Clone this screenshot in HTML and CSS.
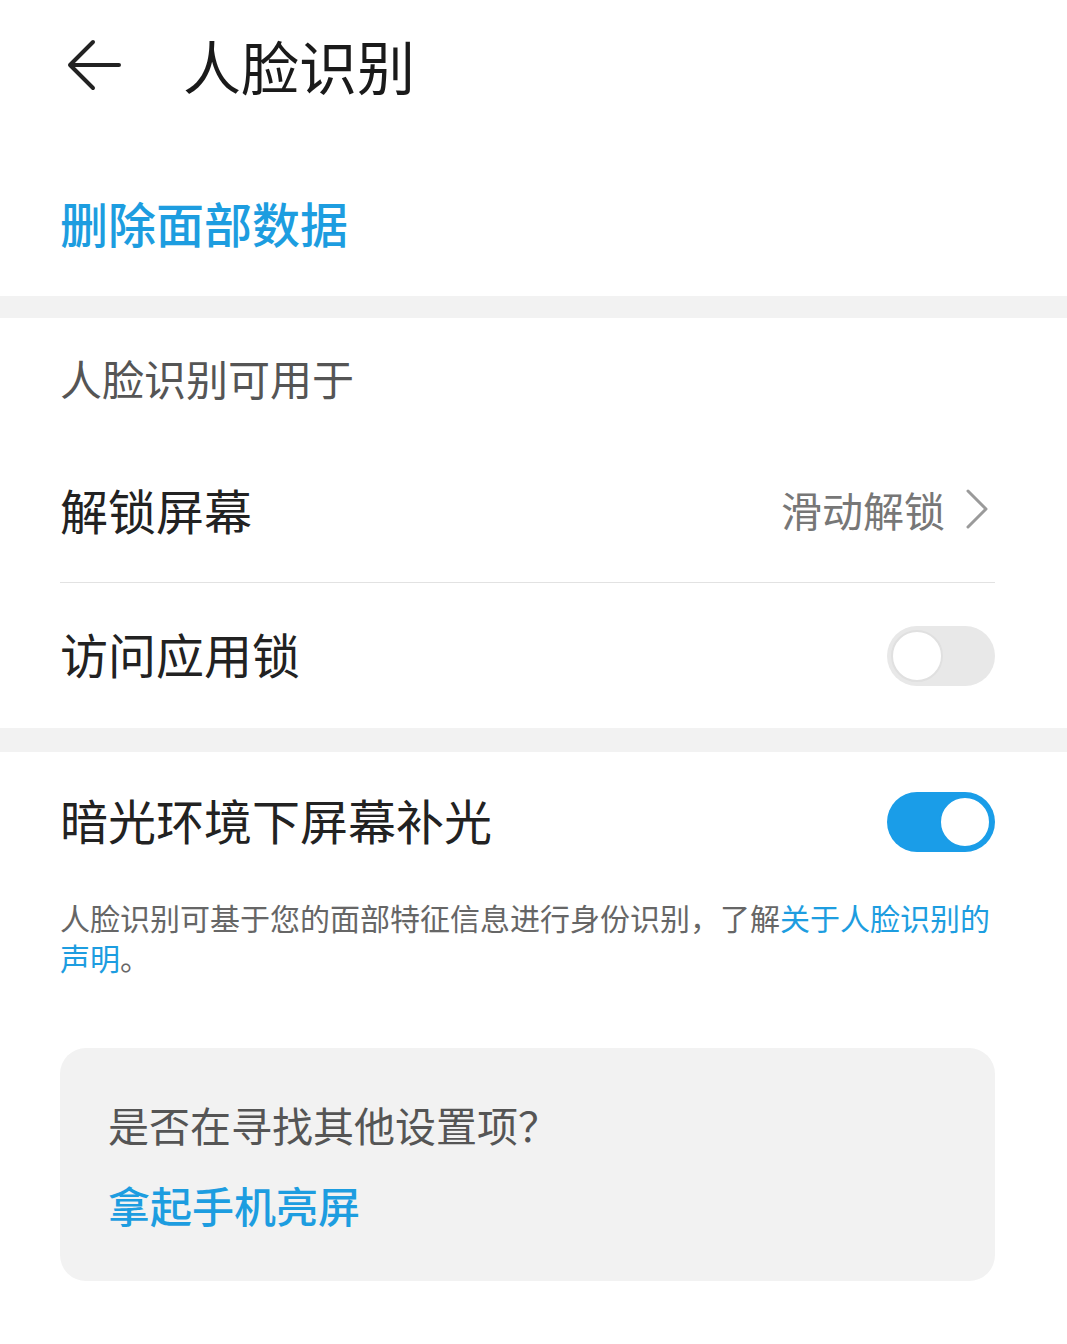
FILE: index.html
```html
<!DOCTYPE html>
<html lang="zh-CN">
<head>
    <meta charset="UTF-8">
    <meta name="viewport" content="width=device-width, initial-scale=1.0">
    <title>人脸识别</title>
    <link rel="stylesheet" href="styles.css">
</head>
<body>
    <header class="top-bar">
        <svg class="back-icon" width="54" height="52" viewBox="0 0 54 52">
            <path d="M26 3 L3 26 L26 49 M3 26 H52" fill="none" stroke="#222" stroke-width="4" stroke-linecap="round" stroke-linejoin="round"/>
        </svg>
        <h1 class="page-title">人脸识别</h1>
    </header>

    <div class="delete-row">删除面部数据</div>

    <div class="band"></div>

    <section class="group">
        <div class="group-title">人脸识别可用于</div>
        <div class="item">
            <span class="item-label">解锁屏幕</span>
            <span class="item-value">
                滑动解锁
                <svg class="chevron" width="24" height="42" viewBox="0 0 24 42">
                    <path d="M3 3 L21 21 L3 39" fill="none" stroke="#9a9a9a" stroke-width="3" stroke-linecap="round" stroke-linejoin="round"/>
                </svg>
            </span>
        </div>
        <div class="divider"></div>
        <div class="item item-last">
            <span class="item-label">访问应用锁</span>
            <span class="switch"><span class="knob"></span></span>
        </div>
    </section>

    <div class="band band-tall"></div>

    <section class="group">
        <div class="item">
            <span class="item-label">暗光环境下屏幕补光</span>
            <span class="switch switch-on"><span class="knob"></span></span>
        </div>
        <p class="note">人脸识别可基于您的面部特征信息进行身份识别，了解<a class="link">关于人脸识别的声明</a>。</p>

        <div class="card">
            <div class="card-title">是否在寻找其他设置项？</div>
            <div class="card-link">拿起手机亮屏</div>
        </div>
    </section>
</body>
</html>
```

FILE: styles.css
```css
/* 人脸识别 设置页 */
body {
    margin: 0;
    background: #fff;
    color: #222;
    font-family: "Noto Sans CJK SC", "Noto Sans", sans-serif;
}
.top-bar {
    height: 130px;
    display: flex;
    align-items: center;
    padding-left: 67px;
}
.back-icon {
    display: block;
}
.page-title {
    margin: 0 0 0 62px;
    font-size: 58px;
    font-weight: 400;
    line-height: 58px;
    color: #1a1a1a;
}
.delete-row {
    padding: 68px 72px 50px 60px;
    font-size: 48px;
    line-height: 48px;
    font-weight: 500;
    color: #1d9de0;
}
.band {
    height: 22px;
    background: #f2f2f2;
}
.band-tall {
    height: 24px;
}
.group {
    padding: 0 72px 0 60px;
}
.group-title {
    height: 124px;
    box-sizing: border-box;
    padding-bottom: 6px;
    display: flex;
    align-items: center;
    font-size: 42px;
    color: #555;
}
.item {
    height: 140px;
    box-sizing: border-box;
    padding-bottom: 6px;
    display: flex;
    align-items: center;
    justify-content: space-between;
}
.item-last {
    height: 145px;
}
.item-label {
    font-size: 48px;
    color: #222;
}
.item-value {
    display: flex;
    align-items: center;
    gap: 20px;
    font-size: 41px;
    color: #777;
}
.chevron {
    display: block;
    margin-right: 6px;
}
.divider {
    height: 1px;
    background: #e2e2e2;
}
.switch {
    width: 108px;
    height: 60px;
    margin-top: 6px;
    border-radius: 30px;
    background: #e8e8e8;
    display: flex;
    align-items: center;
    padding: 0 4px;
    box-sizing: border-box;
}
.knob {
    width: 52px;
    height: 52px;
    border-radius: 50%;
    background: #fff;
    border: 2px solid #e0e0e0;
    box-sizing: border-box;
}
.switch-on {
    background: #1a9de8;
    justify-content: flex-end;
}
.switch-on .knob {
    border-color: #1a9de8;
}
.note {
    margin: 5px 0 0;
    font-size: 30px;
    line-height: 40px;
    color: #666;
}
.link {
    color: #1d9de0;
}
.card {
    margin-top: 71px;
    background: #f2f2f2;
    border-radius: 26px;
    padding: 51px 48px;
}
.card-title {
    font-size: 41px;
    line-height: 50px;
    color: #555;
}
.card-link {
    margin-top: 31px;
    font-size: 42px;
    line-height: 50px;
    font-weight: 500;
    color: #1d9de0;
}
```
